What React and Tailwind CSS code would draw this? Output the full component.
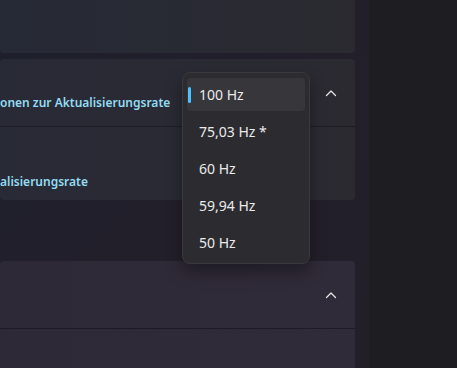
import React from 'react';

const rates = ['100 Hz', '75,03 Hz *', '60 Hz', '59,94 Hz', '50 Hz'];

const ChevronUp = () => (
    <svg width="12" height="8" viewBox="0 0 12 8" fill="none">
        <path d="M1.5 6.5 L6 2 L10.5 6.5" stroke="#e6e6e6" strokeWidth="1.3" strokeLinecap="round" strokeLinejoin="round" />
    </svg>
);

const App = () => {
    return (
        <div className="relative flex h-[368px] w-[457px] overflow-hidden font-['Segoe_UI','Noto_Sans',sans-serif]">
            <div className="flex w-[369px] flex-col bg-gradient-to-br from-[#1c1f2c] via-[#221f2b] to-[#231f29]">
                <div className="h-[53px] w-[355px] rounded-b bg-gradient-to-r from-[#262a36] to-[#2a2a30]" />

                <div className="mt-[6px] w-[355px] rounded bg-gradient-to-r from-[#282a36] to-[#2b2a31]">
                    <div className="flex h-[67px] items-center justify-between">
                        <span className="mt-[20px] whitespace-nowrap text-[12px] font-semibold text-[#93dcf3]">onen zur Aktualisierungsrate</span>
                        <div className="mr-[18px]">
                            <ChevronUp />
                        </div>
                    </div>
                    <div className="h-px bg-[#1d1d26]" />
                    <div className="flex h-[73px] items-end pb-[9px]">
                        <span className="whitespace-nowrap text-[12px] font-semibold text-[#93dcf3]">alisierungsrate</span>
                    </div>
                </div>

                <div className="mt-[61px] w-[355px] flex-1 rounded-t bg-gradient-to-r from-[#2d2936] to-[#302b38]">
                    <div className="flex h-[67px] items-center justify-end pr-[18px]">
                        <ChevronUp />
                    </div>
                    <div className="h-px bg-[#1f1b26]" />
                </div>
            </div>
            <div className="flex-1 bg-[#1e1d21]" />

            <div className="absolute left-[182px] top-[72px] flex w-[128px] flex-col gap-[4px] rounded-lg border border-[#3a393e] bg-[#2c2b30] p-[4px] pt-[5px] shadow-[0_8px_16px_rgba(0,0,0,0.35)]">
                {rates.map((r, i) => (
                    <div
                        key={r}
                        className={`relative flex h-[33px] items-center rounded pl-[12px] text-[14px] text-[#ebebeb] ${i === 0 ? 'bg-[#37363b]' : ''}`}
                    >
                        {i === 0 && <div className="absolute left-[1px] top-[9px] h-[16px] w-[3px] rounded-full bg-[#4cc2ff]" />}
                        {r}
                    </div>
                ))}
            </div>
        </div>
    );
};

export default App;
